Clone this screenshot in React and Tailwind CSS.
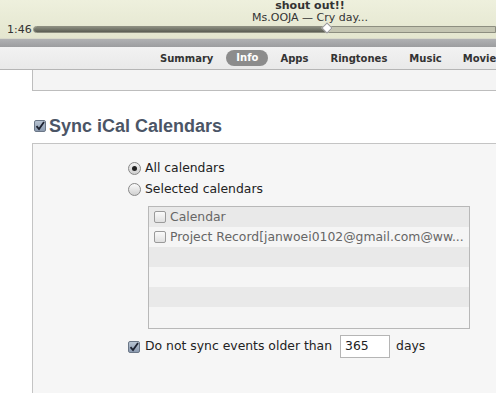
export default function App() {
  const rows = [
    { label: "Calendar" },
    { label: "Project Record[janwoei0102@gmail.com@ww..." },
    {},
    {},
    {},
    {},
  ];

  return (
    <div className="w-[496px] h-[393px] overflow-hidden bg-white font-['DejaVu_Sans',sans-serif] text-[#222]">
      {/* NOW PLAYING */}
      <div className="h-[38px] bg-gradient-to-b from-[#eef0dd] to-[#e4e6cf]">
        <div className="flex flex-col items-center pl-[124px] text-[11px] leading-[12px] text-[#333]">
          <div className="font-bold">shout out!!</div>
          <div>Ms.OOJA — Cry day...</div>
        </div>
        <div className="flex items-center h-[10px] pl-[7px]">
          <span className="text-[11px] leading-none text-[#333] w-[26px]">1:46</span>
          <div className="relative flex-1 h-[7px] rounded-l-full bg-[#c4c5b2] border border-[#8d8e80]">
            <div className="h-full w-[293px] rounded-l-full bg-gradient-to-b from-[#8a8c7e] to-[#5c5e54]" />
            <div className="absolute left-[289px] top-[-3px] w-[8px] h-[8px] rotate-45 bg-white border border-[#999]" />
          </div>
        </div>
      </div>

      {/* STRIPE */}
      <div className="h-[9px] bg-gradient-to-b from-[#b0b1b3] to-[#9c9d9f] border-t border-[#d9dacb]" />

      {/* TABS */}
      <div className="h-[23px] bg-gradient-to-b from-[#f2f2f2] to-[#e9e9e9] border-b border-[#b5b5b5] flex items-center pl-[160px] text-[10px] font-bold text-[#333] whitespace-nowrap overflow-hidden">
        <span>Summary</span>
        <span className="ml-[13px] bg-[#8c8c8c] text-white rounded-full px-[10px] leading-[16px]">Info</span>
        <span className="ml-[12px]">Apps</span>
        <span className="ml-[22px]">Ringtones</span>
        <span className="ml-[22px]">Music</span>
        <span className="ml-[21px]">Movie</span>
      </div>

      {/* PREVIOUS SECTION */}
      <div className="ml-[32px] h-[21px] bg-[#f4f4f4] border-l border-b border-[#bdbdbd]" />

      {/* SYNC ICAL */}
      <div className="flex items-center pl-[34px] pt-[26px] pb-[8px]">
        <div className="w-[12px] h-[12px] bg-gradient-to-b from-[#b8c4d2] to-[#8c9bb0] border border-[#6b7787] rounded-[2px] flex items-center justify-center">
          <svg width="10" height="10" viewBox="0 0 10 10">
            <path d="M1.5 5.2 L4 8 L9 1" fill="none" stroke="#1d2230" strokeWidth="1.8" />
          </svg>
        </div>
        <span className="ml-[3px] font-['Liberation_Sans',sans-serif] font-bold text-[18px] leading-none text-[#4b5566]">
          Sync iCal Calendars
        </span>
      </div>

      <div className="ml-[32px] h-[300px] bg-[#f6f6f6] border-l border-t border-[#c4c4c4] pl-[95px] pt-[14px] text-[12.4px]">
        <div className="flex items-center h-[21px]">
          <div className="w-[13px] h-[13px] rounded-full bg-gradient-to-b from-[#f4f4f4] to-[#cfcfcf] border border-[#888] flex items-center justify-center">
            <div className="w-[5px] h-[5px] rounded-full bg-[#222]" />
          </div>
          <span className="ml-[4px]">All calendars</span>
        </div>
        <div className="flex items-center h-[21px]">
          <div className="w-[13px] h-[13px] rounded-full bg-gradient-to-b from-[#fbfbfb] to-[#d0d0d0] border border-[#888]" />
          <span className="ml-[4px]">Selected calendars</span>
        </div>

        <div className="ml-[20px] mt-[6px] w-[322px] h-[123px] border border-[#b8b8b8] bg-[#f5f5f5]">
          {rows.map((row, i) => (
            <div
              key={i}
              className={`h-[20px] flex items-center pl-[5px] ${i % 2 === 0 ? "bg-[#e9e9e9]" : "bg-[#f5f5f5]"}`}
            >
              {row.label && (
                <>
                  <div className="w-[12px] h-[12px] rounded-[2px] border border-[#9a9a9a] bg-gradient-to-b from-[#fafafa] to-[#e0e0e0]" />
                  <span className="ml-[4px] text-[#666] whitespace-nowrap">{row.label}</span>
                </>
              )}
            </div>
          ))}
        </div>

        <div className="flex items-center mt-[6px]">
          <div className="w-[12px] h-[12px] bg-gradient-to-b from-[#b8c4d2] to-[#8c9bb0] border border-[#6b7787] rounded-[2px] flex items-center justify-center">
            <svg width="10" height="10" viewBox="0 0 10 10">
              <path d="M1.5 5.2 L4 8 L9 1" fill="none" stroke="#1d2230" strokeWidth="1.8" />
            </svg>
          </div>
          <span className="ml-[5px]">Do not sync events older than</span>
          <div className="ml-[8px] w-[50px] h-[23px] bg-white border border-[#b5b5b5] flex items-center pl-[4px]">
            365
          </div>
          <span className="ml-[6px]">days</span>
        </div>
      </div>
    </div>
  );
}
